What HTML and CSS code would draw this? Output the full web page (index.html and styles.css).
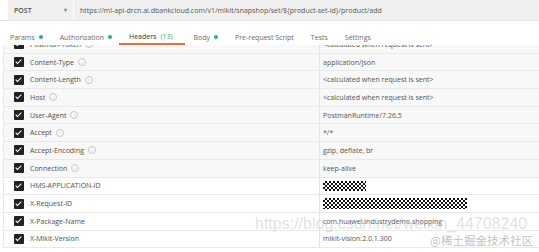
FILE: index.html
```html
<!DOCTYPE html>
<html lang="en">
<head>
  <meta charset="UTF-8">
  <title>Headers</title>
  <link rel="stylesheet" href="styles.css">
</head>
<body>
  <div class="page">
    <div class="request-bar">
      <div class="method">POST <span class="caret">&#9662;</span></div>
      <div class="url">https://ml-api-drcn.ai.dbankcloud.com/v1/mlkit/snapshop/set/${product-set-id}/product/add</div>
    </div>

    <div class="tabs">
      <div class="tab">Params <span class="dot"></span></div>
      <div class="tab">Authorization <span class="dot"></span></div>
      <div class="tab active">Headers <span class="count">(13)</span></div>
      <div class="tab">Body <span class="dot"></span></div>
      <div class="tab">Pre-request Script</div>
      <div class="tab">Tests</div>
      <div class="tab">Settings</div>
    </div>

    <div class="headers">
      <div class="row auto peek">
        <div class="key"><span class="check"></span>Postman-Token <span class="info">i</span></div>
        <div class="value">&lt;calculated when request is sent&gt;</div>
      </div>
      <div class="row auto">
        <div class="key"><span class="check"></span>Content-Type <span class="info">i</span></div>
        <div class="value">application/json</div>
      </div>
      <div class="row auto">
        <div class="key"><span class="check"></span>Content-Length <span class="info">i</span></div>
        <div class="value">&lt;calculated when request is sent&gt;</div>
      </div>
      <div class="row auto">
        <div class="key"><span class="check"></span>Host <span class="info">i</span></div>
        <div class="value">&lt;calculated when request is sent&gt;</div>
      </div>
      <div class="row auto">
        <div class="key"><span class="check"></span>User-Agent <span class="info">i</span></div>
        <div class="value">PostmanRuntime/7.26.5</div>
      </div>
      <div class="row auto">
        <div class="key"><span class="check"></span>Accept <span class="info">i</span></div>
        <div class="value">*/*</div>
      </div>
      <div class="row auto">
        <div class="key"><span class="check"></span>Accept-Encoding <span class="info">i</span></div>
        <div class="value">gzip, deflate, br</div>
      </div>
      <div class="row auto">
        <div class="key"><span class="check"></span>Connection <span class="info">i</span></div>
        <div class="value">keep-alive</div>
      </div>
      <div class="row">
        <div class="key"><span class="check"></span>HMS-APPLICATION-ID</div>
        <div class="value"><span class="masked short"></span></div>
      </div>
      <div class="row">
        <div class="key"><span class="check"></span>X-Request-ID</div>
        <div class="value"><span class="masked long"></span></div>
      </div>
      <div class="row">
        <div class="key"><span class="check"></span>X-Package-Name</div>
        <div class="value">com.huawei.industrydemo.shopping</div>
      </div>
      <div class="row">
        <div class="key"><span class="check"></span>X-Mlkit-Version</div>
        <div class="value">mlkit-vision:2.0.1.300</div>
      </div>
    </div>

    <div class="watermark">https://blog.csdn.net/weixin_44708240</div>
    <div class="credit">@稀土掘金技术社区</div>
  </div>
</body>
</html>
```

FILE: styles.css
```css
body, html {
  margin: 0;
  padding: 0;
  background-color: #fff;
  font-family: 'Open Sans', sans-serif;
}

.page {
  position: relative;
  width: 539px;
  height: 252px;
  overflow: hidden;
}

.request-bar {
  display: flex;
  height: 20px;
  padding-left: 8px;
  border-bottom: 1px solid #e4e4e4;
}

.method {
  width: 66px;
  display: flex;
  align-items: center;
  justify-content: space-between;
  padding: 0 6px 0 6px;
  box-sizing: border-box;
  background-color: #f0f0f0;
  border-right: 1px solid #fff;
  font-size: 7px;
  font-weight: 600;
  color: #505050;
}

.caret {
  font-size: 6px;
  color: #888;
}

.url {
  flex: 1;
  display: flex;
  align-items: center;
  padding-left: 6px;
  background-color: #f0f0f0;
  font-size: 7px;
  color: #555;
  white-space: nowrap;
}

.tabs {
  display: flex;
  height: 24px;
  padding-left: 10px;
  position: relative;
  z-index: 1;
  background-color: #fff;
}

.tab {
  display: flex;
  align-items: center;
  gap: 4px;
  padding-top: 8px;
  margin-right: 17px;
  font-size: 7px;
  color: #6b6b6b;
  white-space: nowrap;
}

.tab.active {
  color: #333;
  padding: 8px 12px 0 10px;
  margin-left: -10px;
  margin-right: 9px;
  border-bottom: 2px solid #f26b3a;
  box-sizing: border-box;
}

.dot {
  width: 4px;
  height: 4px;
  border-radius: 50%;
  background-color: #26b47f;
}

.count {
  color: #26b47f;
}

.headers {
  margin-left: 3px;
  border-left: 1px solid #e8e8e8;
}

.row {
  display: flex;
  height: 17.7px;
  box-sizing: border-box;
  border-bottom: 1px solid #e9e9e9;
  font-size: 7px;
  color: #505050;
}

.row.auto {
  background-color: #f8f8f8;
}

.row.peek {
  margin-top: -9px;
}

.key {
  width: 315px;
  display: flex;
  align-items: center;
  border-right: 1px solid #e3e3e3;
  white-space: nowrap;
}

.check {
  width: 10px;
  height: 10px;
  margin: 0 6px 0 10px;
  border-radius: 1px;
  background-color: #222;
  position: relative;
}

.check::after {
  content: "";
  position: absolute;
  left: 3px;
  top: 1px;
  width: 2px;
  height: 5px;
  border: solid #fff;
  border-width: 0 1.5px 1.5px 0;
  transform: rotate(45deg);
}

.info {
  display: inline-flex;
  align-items: center;
  justify-content: center;
  width: 6px;
  height: 6px;
  margin-left: 4px;
  border: 1px solid #c8c8c8;
  border-radius: 50%;
  font-size: 4px;
  color: #bbb;
}

.value {
  flex: 1;
  display: flex;
  align-items: center;
  padding-left: 3px;
  white-space: nowrap;
  color: #555;
}

.masked {
  display: inline-block;
  background: repeating-conic-gradient(#111 0 25%, #fff 0 50%) 0 0 / 4px 4px;
}

.masked.short {
  width: 43px;
  height: 10px;
}

.masked.long {
  width: 144px;
  height: 11px;
}

.watermark {
  position: absolute;
  left: 255px;
  top: 215px;
  font-family: 'Liberation Sans', sans-serif;
  font-size: 16px;
  color: rgba(190, 190, 190, 0.45);
  white-space: nowrap;
}

.credit {
  position: absolute;
  left: 430px;
  top: 232px;
  font-family: 'Noto Sans CJK SC', sans-serif;
  font-size: 11.5px;
  color: rgba(150, 150, 150, 0.6);
  white-space: nowrap;
}
```
